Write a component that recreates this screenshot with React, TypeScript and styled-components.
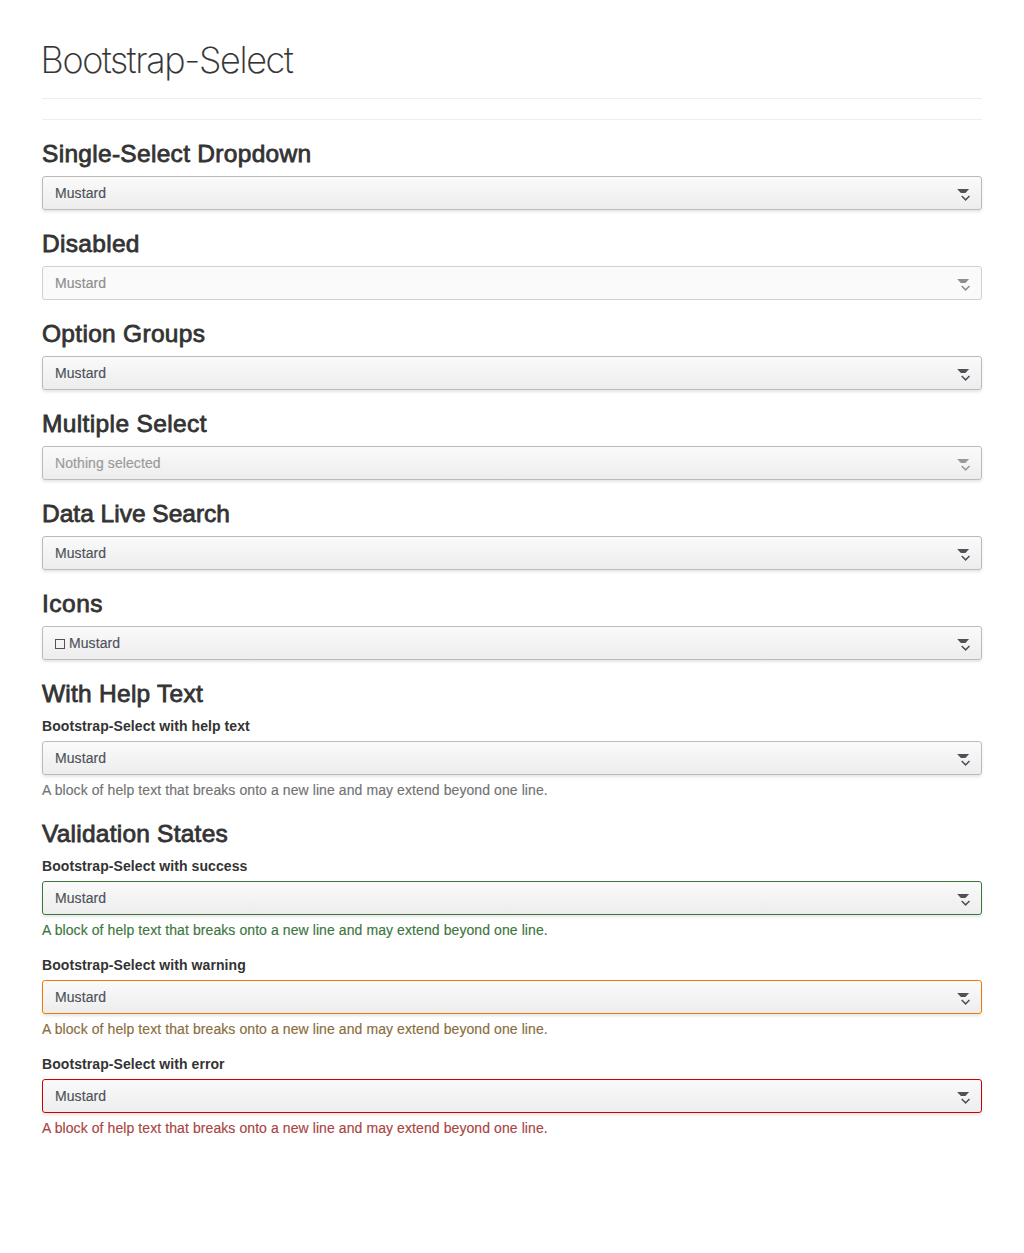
import React from "react";
import styled, { createGlobalStyle } from "styled-components";

const GlobalStyle = createGlobalStyle`
  *, *::before, *::after { box-sizing: border-box; }
  body {
    margin: 0;
    background: #fff;
    color: #333;
    font-family: "Liberation Sans", Arial, sans-serif;
    font-size: 14px;
    line-height: 20px;
    letter-spacing: 0.086px;
    -webkit-text-stroke: 0.15px currentColor;
  }
`;

type Status = "normal" | "success" | "warning" | "error";

const borderColors: Record<Status, string> = {
  normal: "#bbb",
  success: "#3c763d",
  warning: "#ec7a08",
  error: "#c00",
};

const helpColors: Record<Status, string> = {
  normal: "#737373",
  success: "#3c763d",
  warning: "#8a6d3b",
  error: "#a94442",
};

const Page = styled.main`
  width: 940px;
  margin: 0 auto;
  padding-top: 40px;
`;

const Title = styled.h1`
  margin: 0;
  padding-bottom: 18px;
  border-bottom: 1px solid #eee;
  font-family: Inter, "Liberation Sans", sans-serif;
  font-size: 36px;
  font-weight: 200;
  line-height: 40px;
  letter-spacing: -1.32px;
  text-indent: -1.5px;
  -webkit-text-stroke: 0.2px #333;
`;

const Rule = styled.hr`
  margin: 20px 0;
  border: 0;
  border-top: 1px solid #eee;
`;

const Section = styled.section`
  display: flex;
  flex-direction: column;
  margin-bottom: 20px;
`;

const Heading = styled.h2<{ $spacing?: number }>`
  margin: 0;
  padding: 1px 0 9px;
  font-size: 24.5px;
  font-weight: 400;
  line-height: 26px;
  letter-spacing: ${(p) => p.$spacing ?? 0.3}px;
  -webkit-text-stroke: 0.8px #333;
`;

const Fields = styled.div`
  display: flex;
  flex-direction: column;
  gap: 15px;
`;

const Field = styled.div`
  display: flex;
  flex-direction: column;
  gap: 5px;
`;

const Label = styled.label`
  font-weight: 700;
  letter-spacing: 0.08px;
  -webkit-text-stroke: 0;
`;

const Help = styled.span<{ $status: Status }>`
  color: ${(p) => helpColors[p.$status]};
`;

const SelectButton = styled.button<{ $status: Status; $placeholder?: boolean }>`
  display: flex;
  align-items: center;
  justify-content: space-between;
  width: 100%;
  height: 34px;
  padding: 0 11px 0 12px;
  border: 1px solid ${(p) => borderColors[p.$status]};
  border-radius: 3px;
  background: linear-gradient(to bottom, #fafafa, #ededed) padding-box;
  box-shadow: 0 2px 3px rgba(0, 0, 0, 0.1);
  color: ${(p) => (p.$placeholder ? "#999" : "#4d5258")};
  font: inherit;
  letter-spacing: inherit;
  text-align: left;

  &:disabled {
    border-color: #d1d1d1;
    background: #fafafa;
    box-shadow: none;
    color: #8b8d8f;
  }
`;

const Value = styled.span`
  display: flex;
  align-items: center;
  gap: 4px;
`;

const GlyphBox = styled.span`
  width: 10px;
  height: 10px;
  margin-top: 2px;
  border: 1px solid currentColor;
`;

const Caret = styled.svg`
  display: block;
  width: 13px;
  height: 13px;
  margin-top: 3px;
`;

interface SelectProps {
  value?: string;
  status?: Status;
  disabled?: boolean;
  placeholder?: boolean;
  icon?: boolean;
}

function Select({ value = "Mustard", status = "normal", disabled, placeholder, icon }: SelectProps) {
  return (
    <SelectButton type="button" $status={status} $placeholder={placeholder} disabled={disabled}>
      <Value>
        {icon && <GlyphBox />}
        {value}
      </Value>
      <Caret viewBox="0 0 13 13" aria-hidden="true">
        <path d="M0.2 1H12.1L8.9 4.5Q8.4 5 7.7 5H4.6Q3.9 5 3.4 4.5Z" fill="currentColor" />
        <path d="M4.7 8L8.6 11.9L12.5 8" fill="none" stroke="currentColor" strokeWidth="1.5" />
      </Caret>
    </SelectButton>
  );
}

function HelpField({ label, status = "normal" }: { label: string; status?: Status }) {
  return (
    <Field>
      <Label>{label}</Label>
      <Select status={status} />
      <Help $status={status}>A block of help text that breaks onto a new line and may extend beyond one line.</Help>
    </Field>
  );
}

export default function App() {
  return (
    <>
      <GlobalStyle />
      <Page>
        <Title>Bootstrap-Select</Title>
        <Rule />
        <Section>
          <Heading>Single-Select Dropdown</Heading>
          <Select />
        </Section>
        <Section>
          <Heading>Disabled</Heading>
          <Select disabled />
        </Section>
        <Section>
          <Heading>Option Groups</Heading>
          <Select />
        </Section>
        <Section>
          <Heading $spacing={0.37}>Multiple Select</Heading>
          <Select value="Nothing selected" placeholder />
        </Section>
        <Section>
          <Heading $spacing={0}>Data Live Search</Heading>
          <Select />
        </Section>
        <Section>
          <Heading $spacing={0.5}>Icons</Heading>
          <Select icon />
        </Section>
        <Section>
          <Heading $spacing={0.25}>With Help Text</Heading>
          <HelpField label="Bootstrap-Select with help text" />
        </Section>
        <Section>
          <Heading $spacing={0.23}>Validation States</Heading>
          <Fields>
            <HelpField label="Bootstrap-Select with success" status="success" />
            <HelpField label="Bootstrap-Select with warning" status="warning" />
            <HelpField label="Bootstrap-Select with error" status="error" />
          </Fields>
        </Section>
      </Page>
    </>
  );
}
